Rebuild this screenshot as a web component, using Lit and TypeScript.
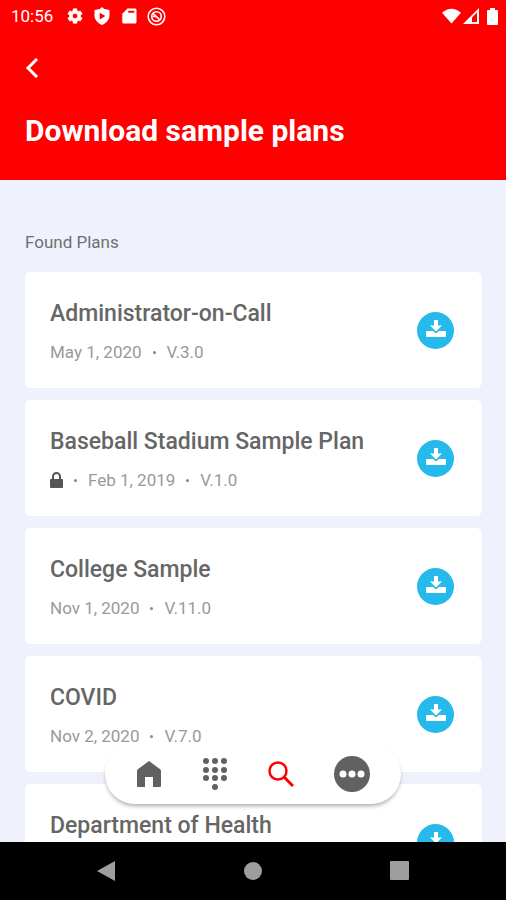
import { LitElement, html, svg, css, nothing } from "lit";
import { customElement, property } from "lit/decorators.js";

interface Plan {
  name: string;
  date?: string;
  version?: string;
  locked?: boolean;
}

const plans: Plan[] = [
  { name: "Administrator-on-Call", date: "May 1, 2020", version: "V.3.0" },
  { name: "Baseball Stadium Sample Plan", date: "Feb 1, 2019", version: "V.1.0", locked: true },
  { name: "College Sample", date: "Nov 1, 2020", version: "V.11.0" },
  { name: "COVID", date: "Nov 2, 2020", version: "V.7.0" },
  { name: "Department of Health" },
];

const icon = (width: number, height: number, box: string, content: unknown) => html`
  <svg width=${width} height=${height} viewBox=${box} fill="currentColor" aria-hidden="true">${content}</svg>
`;

const gear = icon(18, 18, "0 0 24 24", svg`<path stroke="currentColor" d="M19.14 12.94c.04-.3.06-.61.06-.94 0-.32-.02-.64-.07-.94l2.03-1.58a.49.49 0 0 0 .12-.61l-1.92-3.32a.488.488 0 0 0-.59-.22l-2.39.96c-.5-.38-1.03-.7-1.62-.94l-.36-2.54a.484.484 0 0 0-.48-.41h-3.84c-.24 0-.43.17-.47.41l-.36 2.54c-.59.24-1.13.57-1.62.94l-2.39-.96c-.22-.08-.47 0-.59.22L2.74 8.87c-.12.21-.08.47.12.61l2.03 1.58c-.05.3-.09.63-.09.94s.02.64.07.94l-2.03 1.58a.49.49 0 0 0-.12.61l1.92 3.32c.12.22.37.29.59.22l2.39-.96c.5.38 1.03.7 1.62.94l.36 2.54c.05.24.24.41.48.41h3.84c.24 0 .44-.17.47-.41l.36-2.54c.59-.24 1.13-.56 1.62-.94l2.39.96c.22.08.47 0 .59-.22l1.92-3.32c.12-.22.07-.47-.12-.61l-2.01-1.58zM12 15.6A3.61 3.61 0 0 1 8.400 12c0-1.980 1.620-3.600 3.600-3.600s3.600 1.620 3.600 3.600-1.620 3.600-3.600 3.600z"/>`);
const shield = icon(18, 18, "0 0 24 24", svg`<path fill-rule="evenodd" d="M12 0 9 2.500 2 4v7c0 6 4 10.500 10 13 6-2.500 10-7 10-13V4l-7-1.500zM9 7.500 16.500 12 9 16.500z"/>`);
const sdCard = icon(18, 18, "0 0 24 24", svg`<path fill-rule="evenodd" d="M20 2H10L3 9v11c0 1.100.9 2 2 2h15c1.100 0 2-.9 2-2V4c0-1.100-.9-2-2-2zM11 5h8v2.500h-8z"/>`);
const dnd = icon(19, 19, "0 0 24 24", svg`<g fill="none" stroke="currentColor" stroke-width="2"><circle cx="12" cy="12" r="10.500"/><circle cx="12" cy="12" r="6"/><path d="m7.500 8 9 8.500M7 12h4"/></g>`);
const wifi = icon(19, 16, "0 0 20 16", svg`<path d="M0 4.500Q10-4 20 4.500L10 16z"/>`);
const signal = icon(16, 16, "0 0 16 16", svg`<path fill-rule="evenodd" d="M0 16 16 0v16zM9 9.500V14h5V4.500z"/>`);
const battery = icon(11, 17, "0 0 11 17", svg`<path d="M3 0h5v2h2q1 0 1 1v13q0 1-1 1H1q-1 0-1-1V3q0-1 1-1h2z"/>`);
const chevron = icon(14, 20, "0 0 14 20", svg`<path d="M12 1 3 10l9 9" fill="none" stroke="currentColor" stroke-width="3"/>`);
const lock = icon(13, 16, "0 0 13 16", svg`<path d="M3 8V4.500a3.500 3.500 0 0 1 7 0V8" fill="none" stroke="currentColor" stroke-width="2"/><rect y="7" width="13" height="9" rx="1"/>`);
const download = icon(20, 20, "0 0 20 20", svg`<path d="M8 0h4v5.500h4L10 11.500 4 5.500h4z"/><path d="M1 11h6l3 2.500 3-2.500h6q1 0 1 1v4q0 1-1 1H1q-1 0-1-1v-4q0-1 1-1z"/>`);
const home = icon(26, 26, "0 0 26 26", svg`<path d="M13 0 24.500 8.500q.5.500.5 1.500v15q0 1-1 1h-7V16H9v10H2q-1 0-1-1V10q0-1 .5-1.500z"/>`);
const keypad = icon(26, 34, "0 0 26 34", [4, 13, 22].map((x) => [4, 13, 21].map((y) => svg`<circle cx=${x} cy=${y} r="3"/>`)).concat([[svg`<circle cx="13" cy="30" r="3"/>`]]));
const search = icon(26, 26, "0 0 26 26", svg`<g fill="none" stroke="currentColor"><circle cx="10" cy="10" r="8.500" stroke-width="2.500"/><path d="m16 16 9 9" stroke-width="3"/></g>`);
const more = icon(36, 36, "0 0 36 36", svg`<circle cx="18" cy="18" r="18"/><g fill="#fff"><circle cx="9" cy="18" r="3.500"/><circle cx="18" cy="18" r="3.500"/><circle cx="27" cy="18" r="3.500"/></g>`);
const sysBack = icon(20, 22, "0 0 20 22", svg`<path d="M1 11 19 1v20z"/>`);
const sysHome = icon(20, 20, "0 0 20 20", svg`<circle cx="10" cy="10" r="9"/>`);
const sysRecent = icon(20, 20, "0 0 20 20", svg`<rect width="19" height="19" rx="1"/>`);

@customElement("plan-card")
export class PlanCard extends LitElement {
  @property({ attribute: false }) plan!: Plan;

  static styles = css`
    :host {
      display: flex;
      align-items: center;
      justify-content: space-between;
      box-sizing: border-box;
      min-height: 116px;
      padding: 0 28px 0 25px;
      border-radius: 6px;
      background: #fff;
    }
    .info {
      padding-top: 2px;
    }
    .name {
      margin: 0 0 14px;
      font-size: 23px;
      line-height: 28px;
      font-weight: 500;
      color: #666;
    }
    .meta {
      display: flex;
      align-items: center;
      gap: 11px;
      min-height: 20px;
      font-size: 17px;
      line-height: 20px;
      color: #999;
    }
    .lock {
      display: flex;
      color: #555;
    }
    .dot {
      width: 3px;
      height: 3px;
      border-radius: 50%;
      background: #888;
    }
    .download {
      display: grid;
      place-items: center;
      flex: none;
      width: 37px;
      height: 37px;
      padding: 0;
      border: 0;
      border-radius: 50%;
      background: #25b9ec;
      color: #fff;
    }
  `;

  render() {
    const { name, date, version, locked } = this.plan;
    return html`
      <div class="info">
        <h2 class="name">${name}</h2>
        <div class="meta">
          ${locked ? html`<span class="lock">${lock}</span><i class="dot"></i>` : nothing}
          ${date ? html`<span>${date}</span><i class="dot"></i><span>${version}</span>` : nothing}
        </div>
      </div>
      <button class="download" aria-label="Download ${name}">${download}</button>
    `;
  }
}

@customElement("app-root")
export class AppRoot extends LitElement {
  static styles = css`
    :host {
      display: flex;
      flex-direction: column;
      height: 100vh;
      overflow: hidden;
      background: #eff1fd;
      font-family: Roboto, "Noto Sans", sans-serif;
    }
    button {
      display: grid;
      place-items: center;
      padding: 0;
      border: 0;
      background: none;
      color: inherit;
    }
    .header {
      flex: none;
      padding-bottom: 31px;
      background: #f00;
      color: #fff;
    }
    .status {
      display: flex;
      align-items: center;
      justify-content: space-between;
      height: 32px;
      padding: 0 8px 0 11px;
      font-size: 17px;
    }
    .group {
      display: flex;
      align-items: center;
      gap: 9px;
    }
    .clock {
      margin-right: 4px;
    }
    .signals {
      display: flex;
      align-items: center;
      gap: 2px;
    }
    .signals svg:last-child {
      margin-left: 6px;
    }
    .back {
      width: 24px;
      height: 24px;
      margin: 24px 0 0 20px;
    }
    .title {
      margin: 33px 25px 0;
      font-size: 30px;
      line-height: 36px;
      font-weight: 700;
    }
    .body {
      position: relative;
      flex: 1;
      min-height: 0;
      display: flex;
    }
    .scroll {
      flex: 1;
      overflow: hidden;
      padding: 52px 24px 0 25px;
    }
    .label {
      margin: 0 0 20px;
      font-size: 17px;
      line-height: 20px;
      font-weight: 400;
      color: #707070;
    }
    .list {
      display: grid;
      gap: 12px;
    }
    .dock {
      position: absolute;
      left: 50%;
      bottom: 38px;
      transform: translateX(-50%);
      box-sizing: border-box;
      display: flex;
      align-items: center;
      justify-content: space-between;
      width: 296px;
      height: 60px;
      padding: 0 31px;
      border-radius: 30px;
      background: #fff;
      box-shadow: 0 3px 4px -1px #0005;
      color: #616161;
    }
    .active {
      color: #f00;
    }
    .system {
      flex: none;
      display: flex;
      align-items: center;
      justify-content: space-between;
      height: 58px;
      padding: 0 19%;
      background: #000;
      color: #9e9e9e;
    }
  `;

  render() {
    return html`
      <header class="header">
        <div class="status">
          <div class="group"><span class="clock">10:56</span>${gear}${shield}${sdCard}${dnd}</div>
          <div class="signals">${wifi}${signal}${battery}</div>
        </div>
        <button class="back" aria-label="Back">${chevron}</button>
        <h1 class="title">Download sample plans</h1>
      </header>
      <div class="body">
        <main class="scroll">
          <p class="label">Found Plans</p>
          <div class="list">${plans.map((plan) => html`<plan-card .plan=${plan}></plan-card>`)}</div>
        </main>
        <nav class="dock" aria-label="Main">
          <button aria-label="Home">${home}</button>
          <button aria-label="Keypad">${keypad}</button>
          <button class="active" aria-label="Search">${search}</button>
          <button aria-label="More">${more}</button>
        </nav>
      </div>
      <footer class="system">
        <button aria-label="System back">${sysBack}</button>
        <button aria-label="System home">${sysHome}</button>
        <button aria-label="Recent apps">${sysRecent}</button>
      </footer>
    `;
  }
}
